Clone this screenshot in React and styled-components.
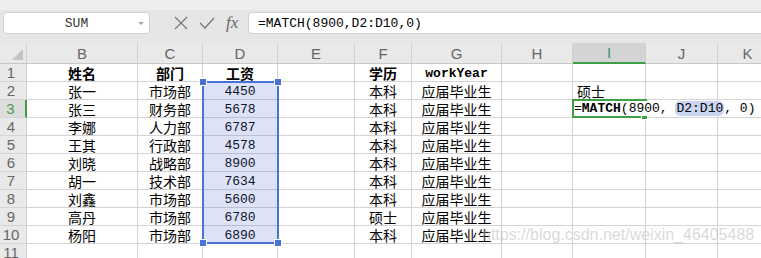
import React from 'react';
import styled, { createGlobalStyle } from 'styled-components';

const COLS = [27, 111, 65, 75, 77, 57, 90, 71, 73, 72, 60];
const LETTERS = ['B', 'C', 'D', 'E', 'F', 'G', 'H', 'I', 'J', 'K'];
const HEADER_H = 21;
const ROW_H = 18;

const rows = [
  ['姓名', '部门', '工资', '', '学历', 'workYear'],
  ['张一', '市场部', '4450', '', '本科', '应届毕业生'],
  ['张三', '财务部', '5678', '', '本科', '应届毕业生'],
  ['李娜', '人力部', '6787', '', '本科', '应届毕业生'],
  ['王其', '行政部', '4578', '', '本科', '应届毕业生'],
  ['刘晓', '战略部', '8900', '', '本科', '应届毕业生'],
  ['胡一', '技术部', '7634', '', '本科', '应届毕业生'],
  ['刘鑫', '市场部', '5600', '', '本科', '应届毕业生'],
  ['高丹', '市场部', '6780', '', '硕士', '应届毕业生'],
  ['杨阳', '市场部', '6890', '', '本科', '应届毕业生'],
  ['', '', '', '', '', ''],
];

const GlobalStyle = createGlobalStyle`
  body {
    margin: 0;
    background: #fff;
    font-family: "Noto Sans CJK SC", "Liberation Sans", sans-serif;
    overflow: hidden;
  }
`;

const Page = styled.div`
  width: 761px;
  height: 258px;
  overflow: hidden;
  position: relative;
`;

const Toolbar = styled.div`
  height: 43px;
  box-sizing: border-box;
  padding-top: 12px;
  background: linear-gradient(#eeeeee 0 10px, #e6e6e6 10px);
  display: flex;
  align-items: flex-start;
`;

const NameBox = styled.div`
  margin-left: 3px;
  width: 147px;
  height: 22px;
  box-sizing: border-box;
  background: #fff;
  border: 1px solid #d2d2d2;
  border-radius: 4px;
  display: flex;
  align-items: center;
  justify-content: center;
  position: relative;
  font-family: "Liberation Mono", monospace;
  font-size: 13px;
  color: #333;
`;

const Caret = styled.span`
  position: absolute;
  right: 5px;
  top: 9px;
  width: 0;
  height: 0;
  border-left: 3px solid transparent;
  border-right: 3px solid transparent;
  border-top: 3px solid #aaa;
`;

const Icons = styled.div`
  width: 98px;
  height: 22px;
  display: flex;
  align-items: center;
  padding-left: 24px;
  box-sizing: border-box;
  gap: 11px;
`;

const Fx = styled.span`
  font-family: "Liberation Serif", serif;
  font-style: italic;
  font-size: 17px;
  color: #666;
  line-height: 22px;
`;

const FormulaInput = styled.div`
  flex: 1;
  height: 22px;
  box-sizing: border-box;
  background: #fff;
  border: 1px solid #d2d2d2;
  border-right: none;
  border-radius: 4px 0 0 4px;
  padding-left: 9px;
  display: flex;
  align-items: center;
  font-family: "Liberation Mono", monospace;
  font-size: 13px;
  color: #000;
`;

const Sheet = styled.div`
  position: relative;
`;

const Row = styled.div`
  display: grid;
  grid-template-columns: ${COLS.map((c) => c + 'px').join(' ')};
  height: ${(p) => (p.$header ? HEADER_H : ROW_H)}px;
  background: ${(p) => (p.$header ? '#e9e9e9' : 'transparent')};
`;

const ColHead = styled.div`
  box-sizing: border-box;
  border-right: 1px solid #d0d0d0;
  border-bottom: ${(p) => (p.$active ? '2px solid #3f9f45' : '1px solid #c8c8c8')};
  background: ${(p) => (p.$active ? '#d4d4d4' : 'transparent')};
  color: ${(p) => (p.$active ? '#3d8f6a' : '#666')};
  font-family: "Liberation Sans", sans-serif;
  font-size: 15px;
  display: flex;
  align-items: center;
  justify-content: center;
`;

const Corner = styled.div`
  box-sizing: border-box;
  border-right: 1px solid #d0d0d0;
  border-bottom: 1px solid #c8c8c8;
  position: relative;
  &::after {
    content: '';
    position: absolute;
    right: 3px;
    bottom: 3px;
    width: 0;
    height: 0;
    border-left: 11px solid transparent;
    border-bottom: 11px solid #c4c4c4;
  }
`;

const RowHead = styled.div`
  box-sizing: border-box;
  background: ${(p) => (p.$active ? '#dcdcdc' : '#e9e9e9')};
  border-right: ${(p) => (p.$active ? '2px solid #3f9f45' : '1px solid #d0d0d0')};
  border-bottom: 1px solid #d4d4d4;
  color: ${(p) => (p.$active ? '#4d9a5a' : '#666')};
  font-family: "Liberation Sans", sans-serif;
  font-size: 15px;
  display: flex;
  align-items: center;
  justify-content: center;
  padding-right: 4px;
  overflow: hidden;
`;

const Cell = styled.div`
  box-sizing: border-box;
  border-right: 1px solid #d4d4d4;
  border-bottom: 1px solid #d4d4d4;
  display: flex;
  align-items: center;
  justify-content: ${(p) => (p.$left ? 'flex-start' : 'center')};
  padding-left: ${(p) => (p.$left ? '4px' : '0')};
  padding-top: ${(p) => (p.$mono ? '2px' : '0')};
  font-family: ${(p) =>
    p.$mono ? '"Liberation Mono", monospace' : '"Noto Sans CJK SC", sans-serif'};
  font-size: ${(p) => (p.$mono ? '13px' : '14px')};
  font-weight: ${(p) => (p.$bold ? 700 : 400)};
  color: #000;
  white-space: nowrap;
  line-height: 1;
  overflow: hidden;
`;

const Selection = styled.div`
  position: absolute;
  left: 202px;
  top: ${HEADER_H + ROW_H - 1}px;
  width: 77px;
  height: ${ROW_H * 9 + 1}px;
  box-sizing: border-box;
  border: 2px solid #4a72d2;
  background: rgba(72, 108, 210, 0.19);
  pointer-events: none;
`;

const Handle = styled.span`
  position: absolute;
  width: 6px;
  height: 6px;
  background: #4a72d2;
  border: 1px solid #fff;
  ${(p) => (p.$top ? 'top: -5px;' : 'bottom: -5px;')}
  ${(p) => (p.$left ? 'left: -5px;' : 'right: -5px;')}
`;

const ActiveCell = styled.div`
  position: absolute;
  left: 572px;
  top: ${HEADER_H + ROW_H * 2 - 1}px;
  width: 75px;
  height: ${ROW_H + 1}px;
  box-sizing: border-box;
  border: 2px solid #3f9f45;
  z-index: 1;
`;

const FillDot = styled.span`
  position: absolute;
  right: -3px;
  bottom: -4px;
  width: 5px;
  height: 5px;
  background: #3f9f45;
  border: 1px solid #fff;
`;

const Editor = styled.div`
  position: absolute;
  left: 574px;
  top: ${HEADER_H + ROW_H * 2 + 1}px;
  height: 15px;
  line-height: 16px;
  padding-right: 3px;
  background: #fff;
  font-family: "Liberation Mono", monospace;
  font-size: 13px;
  color: #000;
  white-space: pre;
  z-index: 2;
`;

const Fn = styled.b`
  font-weight: 700;
`;

const Ref = styled.span`
  background: #c9d6f1;
  border-radius: 5px;
  padding: 0 1px;
`;

const Watermark = styled.div`
  position: absolute;
  left: 482px;
  top: 226px;
  font-family: "Liberation Sans", sans-serif;
  font-size: 16px;
  color: rgba(185, 185, 185, 0.55);
  white-space: nowrap;
  pointer-events: none;
`;

const CloseIcon = () => (
  <svg width="14" height="14" viewBox="0 0 14 14">
    <path d="M1 1 L13 13 M13 1 L1 13" stroke="#777" strokeWidth="1.2" fill="none" />
  </svg>
);

const CheckIcon = () => (
  <svg width="16" height="14" viewBox="0 0 16 14">
    <path d="M1 7 L6 12 L15 2" stroke="#777" strokeWidth="1.3" fill="none" />
  </svg>
);

export default function App() {
  return (
    <Page>
      <GlobalStyle />
      <Toolbar>
        <NameBox>
          SUM
          <Caret />
        </NameBox>
        <Icons>
          <CloseIcon />
          <CheckIcon />
          <Fx>fx</Fx>
        </Icons>
        <FormulaInput>=MATCH(8900,D2:D10,0)</FormulaInput>
      </Toolbar>

      <Sheet>
        <Row $header>
          <Corner />
          {LETTERS.map((l) => (
            <ColHead key={l} $active={l === 'I'}>
              {l}
            </ColHead>
          ))}
        </Row>

        {rows.map((r, i) => {
          const n = i + 1;
          const head = n === 1;
          return (
            <Row key={n}>
              <RowHead $active={n === 3}>{n}</RowHead>
              <Cell $bold={head}>{r[0]}</Cell>
              <Cell $bold={head}>{r[1]}</Cell>
              <Cell $bold={head} $mono={!head}>
                {r[2]}
              </Cell>
              <Cell />
              <Cell $bold={head}>{r[4]}</Cell>
              <Cell $bold={head} $mono={head}>
                {r[5]}
              </Cell>
              <Cell />
              <Cell $left>{n === 2 ? '硕士' : ''}</Cell>
              <Cell />
              <Cell />
            </Row>
          );
        })}

        <Selection>
          <Handle $top $left />
          <Handle $top />
          <Handle $left />
          <Handle />
        </Selection>

        <ActiveCell>
          <FillDot />
        </ActiveCell>
        <Editor>
          {'='}
          <Fn>MATCH</Fn>
          {'(8900, '}
          <Ref>D2:D10</Ref>
          {', 0)'}
        </Editor>
      </Sheet>

      <Watermark>https://blog.csdn.net/weixin_46405488</Watermark>
    </Page>
  );
}
